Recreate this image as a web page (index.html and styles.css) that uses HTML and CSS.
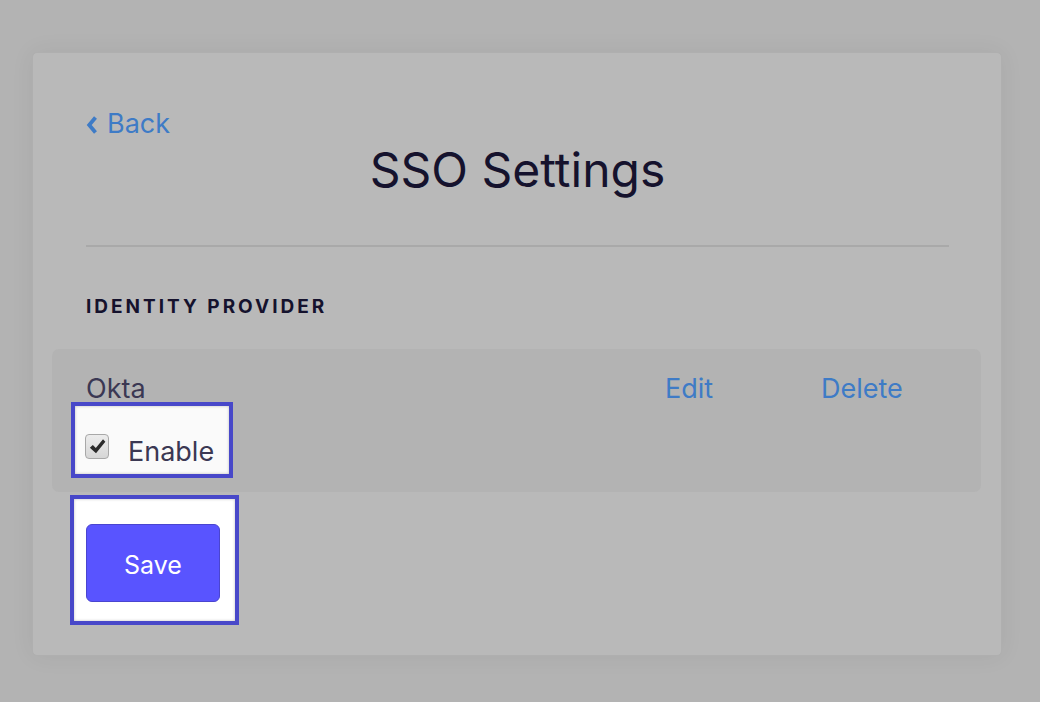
FILE: index.html
```html
<!DOCTYPE html>
<html lang="en">
<head>
<meta charset="utf-8">
<title>SSO Settings</title>
<link rel="stylesheet" href="styles.css">
</head>
<body>
<main class="card">
  <a class="back" href="#">
    <svg class="back-icon" viewBox="0 0 12 20" width="12" height="20" aria-hidden="true"><path d="M9.5 2.5 L3.2 10 L9.5 17.5" fill="none" stroke="currentColor" stroke-width="3.8" stroke-linejoin="miter"/></svg>
    <span>Back</span>
  </a>
  <h1 class="title">SSO Settings</h1>
  <hr class="divider">
  <h2 class="section-label">IDENTITY PROVIDER</h2>
  <section class="provider">
    <div class="provider-head">
      <span class="provider-name">Okta</span>
      <a class="action action-edit" href="#">Edit</a>
      <a class="action action-delete" href="#">Delete</a>
    </div>
    <div class="highlight enable-box">
      <label class="enable">
        <span class="checkbox"><svg viewBox="0 0 16 16" width="17" height="17" aria-hidden="true"><path d="M0.8 9.2 L3.6 6.6 L6.4 9.4 L13.2 1.2 L15.4 3.6 L6.6 14.4 Z" fill="#2a2a2a"/></svg></span>
        <span class="enable-text">Enable</span>
      </label>
    </div>
  </section>
  <div class="highlight save-box">
    <button class="save" type="button">Save</button>
  </div>
</main>
</body>
</html>
```

FILE: styles.css
```css
* { box-sizing: border-box; }
html, body { margin: 0; }
body {
  background: #b3b3b3;
  font-family: Inter, "Noto Sans", sans-serif;
  padding: 52px 38px 0 32px;
  height: 702px;
  overflow: hidden;
}
.card {
  width: 970px;
  height: 604px;
  background: #b9b9b9;
  border: 1px solid #afafaf;
  border-radius: 5px;
  box-shadow: 0 0 24px rgba(0,0,0,0.06);
  padding: 55px 52px 0 53px;
}
.back {
  display: inline-flex;
  align-items: center;
  gap: 9px;
  color: #3e7bc6;
  text-decoration: none;
  font-size: 27px;
  line-height: 32px;
}
.back-icon { margin-top: 1px; }
.title {
  margin: 1px 0 0;
  text-align: center;
  font-weight: 400;
  font-size: 48px;
  line-height: 58px;
  color: #15122d;
}
.divider {
  margin: 46px 0 0;
  border: 0;
  height: 2px;
  background: #a9a9a9;
}
.section-label {
  margin: 48px 0 0;
  font-size: 19px;
  line-height: 24px;
  font-weight: 700;
  letter-spacing: 3px;
  color: #15122d;
}
.provider {
  margin: 30px -32px 0 -34px;
  background: #b3b3b3;
  border-radius: 7px;
  padding: 27px 78px 14px 34px;
}
.provider-head {
  display: flex;
  font-size: 27px;
  line-height: 26px;
}
.provider-name { flex: 1; color: #3b3853; }
.action { color: #3e7bc6; text-decoration: none; }
.action-edit { width: 156px; }
.action-delete { width: 82px; }
.highlight {
  background: #fafafa;
  border: 4px solid #4848c9;
  box-shadow: inset 0 0 3px rgba(0,0,0,0.25);
}
.enable-box {
  display: inline-block;
  vertical-align: top;
  margin-left: -15px;
  padding: 21px 15px 10px 10px;
}
.enable {
  display: flex;
  align-items: center;
  gap: 19px;
  height: 37px;
}
.checkbox {
  width: 24px;
  height: 25px;
  border: 1px solid #a8a8a8;
  border-radius: 4px;
  background: linear-gradient(#ececec, #d6d6d6);
  display: flex;
  align-items: center;
  justify-content: center;
  margin-top: 2px;
}
.enable-text {
  font-size: 27px;
  line-height: 37px;
  color: #3b3853;
  padding-top: 12px;
}
.save-box {
  display: inline-block;
  vertical-align: top;
  margin: 3px 0 0 -16px;
  padding: 25px 15px 19px 12px;
  background: #ffffff;
}
.save {
  display: block;
  width: 134px;
  height: 78px;
  border: 1px solid #4a45cf;
  border-radius: 6px;
  background: #5954ff;
  color: #ffffff;
  font-family: Inter, "Noto Sans", sans-serif;
  font-size: 25px;
  padding: 4px 0 0;
}
```
